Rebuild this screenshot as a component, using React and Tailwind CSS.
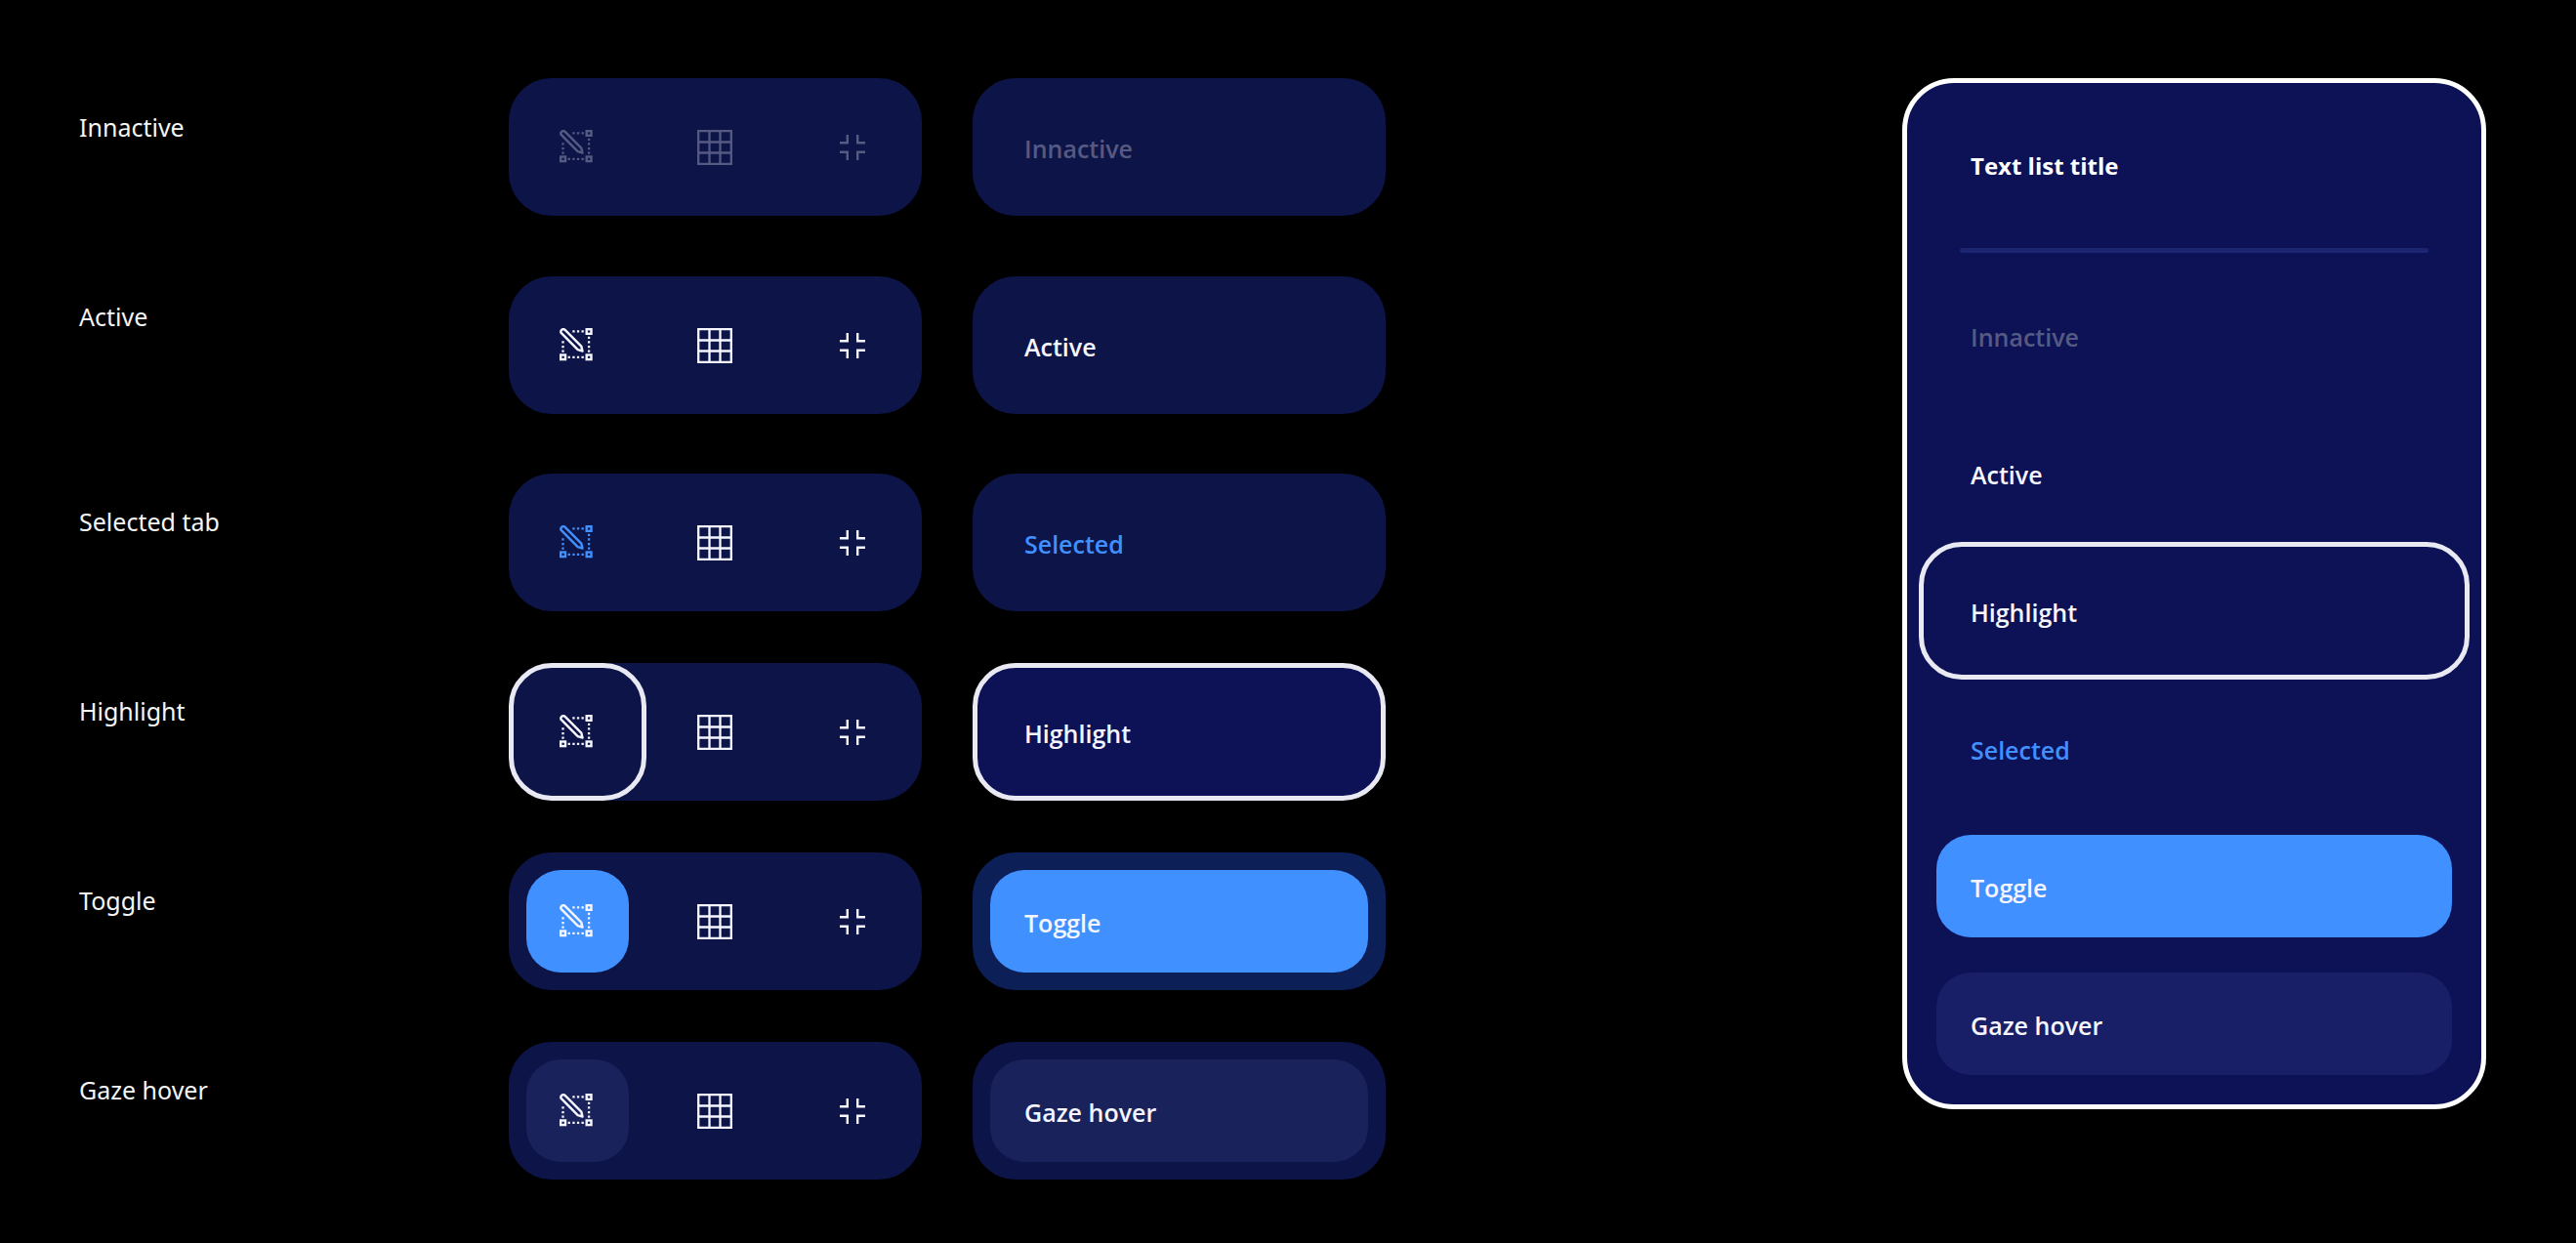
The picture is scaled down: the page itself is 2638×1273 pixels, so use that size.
const states = [
  { id: "inactive", label: "Innactive", text: "Innactive", labelGap: "", rowGap: "" },
  { id: "active", label: "Active", text: "Active", labelGap: "", rowGap: "mt-[9px]" },
  { id: "selected", label: "Selected tab", text: "Selected", labelGap: "mt-4", rowGap: "mt-2" },
  { id: "highlight", label: "Highlight", text: "Highlight", labelGap: "", rowGap: "" },
  { id: "toggle", label: "Toggle", text: "Toggle", labelGap: "", rowGap: "" },
  { id: "gaze", label: "Gaze hover", text: "Gaze hover", labelGap: "", rowGap: "" },
];

const ink = {
  inactive: "text-[#555a83]",
  active: "text-[#f5f6ff]",
  selected: "text-[#4190ff]",
  highlight: "text-[#f5f6ff]",
  toggle: "text-[#f5f6ff]",
  gaze: "text-[#f5f6ff]",
};

function PencilFrame() {
  return (
    <svg width="34" height="34" viewBox="0 0 34 34" fill="none" stroke="currentColor" strokeWidth="2.4" aria-hidden="true">
      <rect x="27.7" y="1.2" width="4.8" height="4.6" />
      <rect x="1.2" y="27.5" width="4.8" height="4.6" />
      <rect x="27.7" y="27.5" width="4.8" height="4.6" />
      <path d="M1.9 5.2 A2.5 2.5 0 0 1 5.4 1.7 L22.3 18.6 L23.5 23.5 L18.7 22.2 Z" strokeLinejoin="round" />
      <path
        strokeWidth="2.3"
        d="M13.3 3.4h2.3M17.9 3.4h2.3M22.5 3.4h2.3M8.6 29.8h2.3M13.3 29.8h2.3M17.9 29.8h2.3M22.5 29.8h2.3M3.5 13.2v2.3M3.5 17.9v2.3M3.5 22.5v2.3M30.1 8.8v2.3M30.1 13.2v2.3M30.1 17.9v2.3M30.1 22.5v2.3"
      />
    </svg>
  );
}

function GridIcon() {
  return (
    <svg width="36" height="36" viewBox="0 0 36 36" fill="none" stroke="currentColor" strokeWidth="2.3" aria-hidden="true">
      <path d="M1.2 1.2h33.6v33.6H1.2zM12.5 1v34M23.5 1v34M1 12.5h34M1 23.5h34" />
    </svg>
  );
}

function ShrinkIcon() {
  return (
    <svg width="26" height="26" viewBox="0 0 26 26" fill="none" stroke="currentColor" strokeWidth="2.4" aria-hidden="true">
      <path d="M0 8.2h7.8V0M26 8.2h-7.8V0M0 17.8h7.8V26M26 17.8h-7.8V26" />
    </svg>
  );
}

const iconSurface = {
  inactive: "m-[18px] size-[105px]",
  active: "m-[18px] size-[105px]",
  selected: "m-[18px] size-[105px]",
  highlight: "size-[141px] rounded-[44px] border-5 border-[#e8e9f2]",
  toggle: "m-[18px] size-[105px] rounded-[35px] bg-[#4190ff]",
  gaze: "m-[18px] size-[105px] rounded-[35px] bg-[#19225a]",
};

function IconBar({ state }) {
  const rest = state.id === "inactive" ? "text-[#555a83]" : "text-[#f5f6ff]";
  const disabled = state.id === "inactive";
  return (
    <div role="toolbar" aria-label={state.label} className={`flex h-[141px] w-[423px] rounded-[44px] bg-[#0d1447] ${state.rowGap}`}>
      <button type="button" aria-label="Edit frame" disabled={disabled} className={`flex shrink-0 items-center justify-center pr-1 pb-0.5 ${iconSurface[state.id]} ${ink[state.id]}`}>
        <PencilFrame />
      </button>
      <button type="button" aria-label="Grid" disabled={disabled} className={`flex h-full flex-1 items-center justify-center pr-0.5 ${rest}`}>
        <GridIcon />
      </button>
      <button type="button" aria-label="Shrink" disabled={disabled} className={`flex h-full flex-1 items-center justify-center pr-0.5 ${rest}`}>
        <ShrinkIcon />
      </button>
    </div>
  );
}

const pillShell = {
  inactive: "bg-[#0d1447]",
  active: "bg-[#0d1447]",
  selected: "bg-[#0d1447]",
  highlight: "bg-[#0d1155] border-5 border-[#e8e9f2]",
  toggle: "bg-[#0c1f57] p-[18px]",
  gaze: "bg-[#0d1447] p-[18px]",
};

const pillInner = {
  inactive: "px-[53px]",
  active: "px-[53px]",
  selected: "px-[53px]",
  highlight: "px-12",
  toggle: "rounded-[35px] bg-[#4190ff] px-[35px]",
  gaze: "rounded-[35px] bg-[#19225a] px-[35px]",
};

function TextPill({ state }) {
  return (
    <button
      type="button"
      disabled={state.id === "inactive"}
      className={`flex h-[141px] w-[423px] rounded-[44px] ${pillShell[state.id]} ${state.rowGap}`}
    >
      <span className={`flex h-full w-full items-center pt-0.5 text-[25px] leading-9 font-semibold ${pillInner[state.id]} ${ink[state.id]}`}>
        {state.text}
      </span>
    </button>
  );
}

const listItems = [
  { id: "inactive", text: "Innactive", box: "mx-[30px] my-[18px] h-[105px] px-[35px]" },
  { id: "active", text: "Active", box: "mx-[30px] my-[18px] h-[105px] px-[35px]" },
  { id: "highlight", text: "Highlight", box: "mx-3 h-[141px] rounded-[44px] border-5 border-[#e8e9f2] px-12" },
  { id: "selected", text: "Selected", box: "mx-[30px] my-[18px] h-[105px] px-[35px]" },
  { id: "toggle", text: "Toggle", box: "mx-[30px] my-[18px] h-[105px] rounded-[35px] bg-[#4190ff] px-[35px]" },
  { id: "gaze", text: "Gaze hover", box: "mx-[30px] my-[18px] h-[105px] rounded-[35px] bg-[#191f67] px-[35px]" },
];

function ListPanel() {
  return (
    <section className="flex w-[598px] flex-col rounded-[53px] border-5 border-white bg-[#0d1155] pb-3">
      <h2 className="px-[65px] pt-[67px] text-[24px] leading-9 font-bold text-white">Text list title</h2>
      <hr className="mx-[54px] mt-[66px] h-[5px] rounded-full border-0 bg-[#1b2570]" />
      <ul className="mt-[14px] flex flex-col">
        {listItems.map((item) => (
          <li key={item.id} className="flex">
            <button
              type="button"
              disabled={item.id === "inactive"}
              className={`flex flex-1 items-center pt-0.5 text-[25px] leading-9 font-semibold ${item.box} ${ink[item.id]}`}
            >
              {item.text}
            </button>
          </li>
        ))}
      </ul>
    </section>
  );
}

export default function App() {
  return (
    <main className="flex min-h-screen items-start justify-between bg-black py-20 pr-[92px] pl-[81px] font-['Open_Sans',sans-serif]">
      <div className="flex items-start">
        <div className="flex w-[440px] flex-col gap-[53px] font-['Noto_Sans',sans-serif] text-[25px] leading-9 text-[#f5f5f5]">
          {states.map((s) => (
            <p key={s.id} className={`h-[141px] pt-8 ${s.labelGap}`}>
              {s.label}
            </p>
          ))}
        </div>
        <div className="flex flex-col gap-[53px]">
          {states.map((s) => (
            <IconBar key={s.id} state={s} />
          ))}
        </div>
        <div className="ml-[52px] flex flex-col gap-[53px]">
          {states.map((s) => (
            <TextPill key={s.id} state={s} />
          ))}
        </div>
      </div>
      <ListPanel />
    </main>
  );
}
